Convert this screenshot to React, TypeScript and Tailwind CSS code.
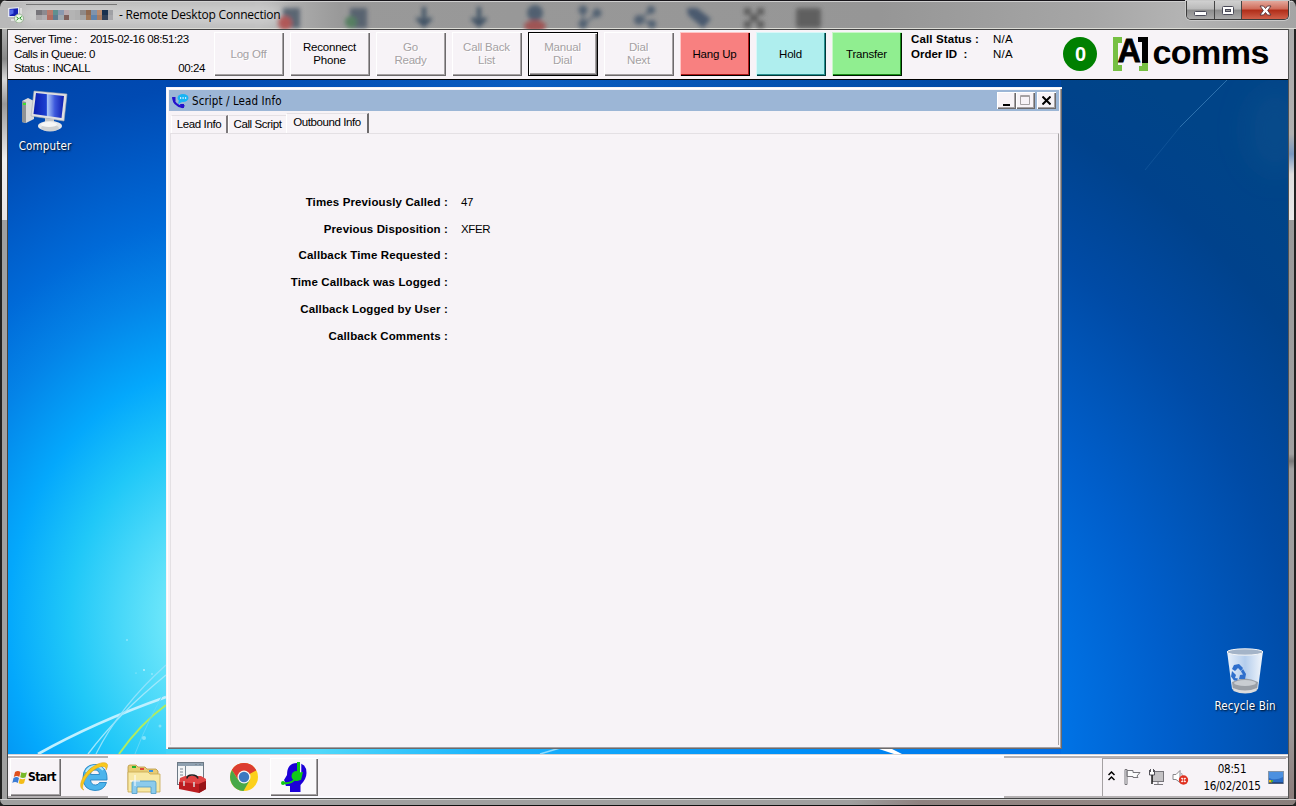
import type { ReactNode } from "react";

const ui = "font-['Liberation_Sans',sans-serif] text-[11.500px]";
const tahoma = "font-['DejaVu_Sans_Condensed','DejaVu_Sans',sans-serif]";

type Tone = "off" | "plain" | "focus" | "red" | "cyan" | "green";

const tones: Record<Tone, string> = {
  off: "text-[#a5a1a3] [text-shadow:1px_1px_#fff] shadow-[inset_1px_1px_#fff,inset_-1px_-1px_#6d6a6c,inset_-2px_-2px_#a5a1a3]",
  plain: "text-black shadow-[inset_1px_1px_#fff,inset_-1px_-1px_#6d6a6c,inset_-2px_-2px_#a5a1a3]",
  focus:
    "text-[#a5a1a3] [text-shadow:1px_1px_#fff] shadow-[inset_0_0_0_1px_#000,inset_2px_2px_#fff,inset_-2px_-2px_#6d6a6c,inset_-3px_-3px_#a5a1a3]",
  red: "bg-[#f88080] text-black shadow-[inset_1px_1px_#ffc6c6,inset_-1px_-1px_#000,inset_-2px_-2px_#b01818]",
  cyan: "bg-[#afeeee] text-black shadow-[inset_1px_1px_#d8f8f8,inset_-1px_-1px_#003838,inset_-2px_-2px_#289090]",
  green: "bg-[#90ee90] text-black shadow-[inset_1px_1px_#c8f8c8,inset_-1px_-1px_#001800,inset_-2px_-2px_#189018]",
};

const buttons: { lines: string[]; tone: Tone; wide?: boolean }[] = [
  { lines: ["Log Off"], tone: "off" },
  { lines: ["Reconnect", "Phone"], tone: "plain", wide: true },
  { lines: ["Go", "Ready"], tone: "off" },
  { lines: ["Call Back", "List"], tone: "off" },
  { lines: ["Manual", "Dial"], tone: "focus" },
  { lines: ["Dial", "Next"], tone: "off" },
  { lines: ["Hang Up"], tone: "red" },
  { lines: ["Hold"], tone: "cyan" },
  { lines: ["Transfer"], tone: "green" },
];

const fields = [
  ["Times Previously Called :", "47"],
  ["Previous Disposition :", "XFER"],
  ["Callback Time Requested :", ""],
  ["Time Callback was Logged :", ""],
  ["Callback Logged by User :", ""],
  ["Callback Comments :", ""],
];

const mosaic = [
  "#77757a", "#8c8a90", "#b87a6c", "#5f9090", "#8a98b0", "#b9a9ae", "#b4b4b4", "#b0b0b0", "#8f8a88", "#8f6a50", "#7f93ad", "#b88c72", "#17304f", "#9fa0a4",
  "#a9a6a8", "#b0aeb2", "#b06c60", "#5f7c90", "#a0a8b0", "#80605c", "#b4b4b4", "#b0b0b0", "#a7a8a8", "#a07858", "#5f83ad", "#a87c62", "#304058", "#a8a8ac",
];

function GlassBlurs() {
  return (
    <svg className="absolute left-0 top-0" width="1296" height="29">
      <defs>
        <filter id="soft" x="-50%" y="-50%" width="200%" height="200%">
          <feGaussianBlur stdDeviation="2.2" />
        </filter>
        <filter id="glow" x="-20%" y="-100%" width="140%" height="300%">
          <feGaussianBlur stdDeviation="7" />
        </filter>
      </defs>
      <rect x="20" y="6" width="262" height="18" rx="9" fill="#d8d8d8" opacity=".75" filter="url(#glow)" />
      <g filter="url(#soft)" opacity=".85">
        <rect x="283" y="8" width="17" height="20" fill="#4d5a69" />
        <circle cx="285" cy="23" r="7" fill="#b04a48" />
        <rect x="350" y="8" width="17" height="20" fill="#4d5a69" />
        <circle cx="351" cy="22" r="6" fill="#4c7a58" />
        <path d="M424 7v17M417 18l7 7 7-7" stroke="#33475c" strokeWidth="4" fill="none" />
        <path d="M479 7v17M472 18l7 7 7-7" stroke="#33475c" strokeWidth="4" fill="none" />
        <circle cx="535" cy="13" r="8" fill="#44566a" />
        <ellipse cx="535" cy="26" rx="11" ry="6" fill="#a04848" />
        <g fill="#46586c" stroke="#46586c" strokeWidth="2">
          <path d="M583 11v13L597 14" fill="none" />
          <circle cx="583" cy="10" r="3.500" />
          <circle cx="583" cy="24" r="3.500" />
          <circle cx="597" cy="13" r="3.500" />
          <path d="M652 10l-12 9 12 5" fill="none" />
          <circle cx="651" cy="10" r="3" />
          <circle cx="639" cy="20" r="4" />
          <circle cx="652" cy="24" r="3" />
        </g>
        <path d="M687 8h10l14 11-8 9-15-13z" fill="#3c5068" />
        <g fill="#555">
          <rect x="744" y="8" width="7" height="7" />
          <rect x="757" y="8" width="7" height="7" />
          <rect x="744" y="21" width="7" height="7" />
          <rect x="757" y="21" width="7" height="7" />
          <rect x="750" y="14" width="8" height="8" />
        </g>
        <rect x="796" y="8" width="25" height="20" rx="3" fill="#565656" />
      </g>
    </svg>
  );
}

function RemoteIcon() {
  return (
    <svg width="16" height="16" viewBox="0 0 16 16">
      <path d="M0 1l11-1v10H0z" fill="#e4e8f0" />
      <path d="M1.500 2l8.500-.8v7.800H1.500z" fill="#1420b4" />
      <path d="M2 2.500h3.500v4L2 8z" fill="#5068e8" />
      <path d="M3 12h5v2H3z" fill="#ddd" />
      <path d="M12 1h2v7h-2z" fill="#ddd" />
      <circle cx="11" cy="11.500" r="4.500" fill="#e9f6e4" stroke="#7e9a78" strokeWidth=".7" />
      <path d="M8.500 10l2 1.500-2 1.700M13.700 9.500l-2 1.700 2 1.500" stroke="#1b9420" strokeWidth="1" fill="none" />
    </svg>
  );
}

function TitleBar() {
  return (
    <header className="relative h-[29px] shrink-0 bg-[linear-gradient(90deg,#b9b9b9_0,#bababa_260px,#999_340px,#969696_880px,#a6a6a6_1090px,#b3b3b3_1180px,#a4a4a4_1296px)] shadow-[inset_0_1px_#17151a,inset_0_2px_#cfcfcf,inset_0_-1px_#dcdcd6]">
      <GlassBlurs />
      <div className="relative flex h-full items-start justify-between">
        <div className="flex h-[29px] items-center pl-2">
          <RemoteIcon />
          <div className="ml-[2px] mt-[1px] flex h-[22px] w-[91px] items-center justify-center border-t border-[#777] pl-[6px]">
            <div className="mb-0.5 grid grid-cols-14 [grid-auto-rows:5px]">
              {mosaic.map((c, i) => (
                <span key={i} className="w-[5.500px]" style={{ background: c }} />
              ))}
            </div>
          </div>
          <span className="ml-0.5 whitespace-nowrap font-['Open_Sans',sans-serif] text-[12px] leading-4 tracking-[-0.200px] text-black">
            - Remote Desktop Connection
          </span>
        </div>
        <div className="mr-[7px] mt-[1px] flex h-[19px] w-[103px] overflow-hidden rounded-b-[5px] border border-t-0 border-[#3a3a3a] shadow-[0_0_0_1px_#c8c8c8]">
          <div className="flex w-[28px] items-center justify-center border-r border-[#444] bg-[linear-gradient(#d0d0d0_0,#b9b9b9_45%,#8c8c8c_50%,#aaa_100%)]">
            <svg width="13" height="5" className="mt-1.5">
              <rect x=".5" y=".5" width="12" height="4" rx="1" fill="#fff" stroke="#4a4a58" />
            </svg>
          </div>
          <div className="flex w-[27px] items-center justify-center border-r border-[#444] bg-[linear-gradient(#d0d0d0_0,#b9b9b9_45%,#8c8c8c_50%,#aaa_100%)]">
            <svg width="12" height="9">
              <rect x=".5" y=".5" width="11" height="8" rx="1" fill="#fff" stroke="#4a4a58" />
              <rect x="3.500" y="3.500" width="5" height="2" fill="#999" stroke="#4a4a58" />
            </svg>
          </div>
          <div className="flex flex-1 items-center justify-center bg-[linear-gradient(#e3a89c_0,#cf6a58_45%,#b02c18_50%,#d0604a_100%)]">
            <svg width="13" height="11" viewBox="0 0 13 11">
              <path d="M1 1h3.500l2 2.500 2-2.500H12L8.700 5.500 12 10H8.500l-2-2.500-2 2.500H1l3.300-4.500z" fill="#fff" stroke="#53333a" strokeWidth=".9" />
            </svg>
          </div>
        </div>
      </div>
    </header>
  );
}

function Logo() {
  return (
    <div className="flex h-[36px] items-start">
      <svg width="36" height="35" viewBox="0 0 36 35" className="shrink-0 overflow-visible">
        <path d="M0 0h9v6H5v22h4v6H0z" fill="#76c043" />
        <path d="M29 26h6v8h-9v-5h3z" fill="#76c043" />
        <path d="M25 0h10v26h-6V5h-4z" fill="#000" />
        <text
          transform="translate(4.500 25.300) scale(.95 1)"
          className="font-['Liberation_Sans',sans-serif] text-[34px] font-bold"
          fill="#000"
          stroke="#000"
          strokeWidth=".8"
        >
          A
        </text>
      </svg>
      <span className="ml-[3px] mt-[-4px] font-['Liberation_Sans',sans-serif] text-[34px] font-bold leading-[38px] tracking-[-0.5px] text-black">
        comms
      </span>
    </div>
  );
}

function Toolbar() {
  return (
    <div className={`flex h-[50px] shrink-0 border-b border-black bg-[#f7f3f7] text-black ${ui}`}>
      <div className="w-[206px] pl-[6px] pt-[2px] leading-[14.500px] tracking-[-0.42px]">
        <p className="flex gap-[13px] whitespace-pre">
          <span>Server Time :</span>
          <span>2015-02-16 08:51:23</span>
        </p>
        <p>Calls in Queue: 0</p>
        <p className="flex justify-between pr-[9px]">
          <span>Status : INCALL</span>
          <span>00:24</span>
        </p>
      </div>
      <div className="flex gap-1.5 pt-[2px]">
        {buttons.map((b) => (
          <button
            key={b.lines[0]}
            className={`flex h-[44px] flex-col items-center justify-center pr-px leading-[13px] tracking-[-0.2px] ${b.wide ? "w-[80px]" : "w-[70px]"} ${tones[b.tone]}`}
          >
            {b.lines.map((l) => (
              <span key={l}>{l}</span>
            ))}
          </button>
        ))}
      </div>
      <dl className="ml-[9px] grid h-[30px] grid-cols-[82px_auto] pt-[2px] leading-[15px]">
        <dt className="font-bold tracking-[0.12px]">Call Status :</dt>
        <dd className="tracking-[0.2px]">N/A</dd>
        <dt className="font-bold">Order ID &nbsp;:</dt>
        <dd className="tracking-[0.2px]">N/A</dd>
      </dl>
      <div className="ml-auto flex pr-[19px] pt-[7px]">
        <span className="mr-4 flex size-[34px] items-center justify-center rounded-full bg-[#008000] pb-px text-[20px] font-bold text-white">
          0
        </span>
        <Logo />
      </div>
    </div>
  );
}

function Wallpaper() {
  return (
    <svg className="absolute left-0 top-0" width="1280" height="674" viewBox="8 80 1280 674">
      <defs>
        <radialGradient id="wl" gradientUnits="userSpaceOnUse" cx="0" cy="0" r="560" gradientTransform="translate(230 620) scale(1 1.15)">
          <stop offset="0" stopColor="#a0f4fc" />
          <stop offset=".114" stopColor="#6ce6fa" />
          <stop offset=".287" stopColor="#20c8f8" />
          <stop offset=".396" stopColor="#04a8fc" />
          <stop offset=".518" stopColor="#0484e8" />
          <stop offset=".625" stopColor="#006ad8" />
          <stop offset=".737" stopColor="#0058c4" />
          <stop offset=".83" stopColor="#004ab2" />
          <stop offset="1" stopColor="#0040a4" />
        </radialGradient>
        <radialGradient id="wr" gradientUnits="userSpaceOnUse" cx="700" cy="750" r="800">
          <stop offset=".4" stopColor="#007cf0" />
          <stop offset=".469" stopColor="#0070e2" />
          <stop offset=".586" stopColor="#005fcc" />
          <stop offset=".675" stopColor="#0055b8" />
          <stop offset=".76" stopColor="#004ba6" />
          <stop offset=".9" stopColor="#00428c" />
          <stop offset="1" stopColor="#004488" />
        </radialGradient>
        <linearGradient id="wt">
          <stop offset="0" stopColor="#0048b0" />
          <stop offset=".4" stopColor="#0a5cc0" />
          <stop offset="1" stopColor="#0046a0" />
        </linearGradient>
        <linearGradient id="wb">
          <stop offset="0" stopColor="#40d4f8" />
          <stop offset=".17" stopColor="#50d8fa" />
          <stop offset=".35" stopColor="#1cb4fc" />
          <stop offset=".7" stopColor="#0090f8" />
          <stop offset="1" stopColor="#006ce4" />
        </linearGradient>
        <filter id="s1">
          <feGaussianBlur stdDeviation=".6" />
        </filter>
        <filter id="s2" x="-100%" y="-100%" width="300%" height="300%">
          <feGaussianBlur stdDeviation="14" />
        </filter>
      </defs>
      <rect x="8" y="80" width="158" height="674" fill="url(#wl)" />
      <rect x="166" y="80" width="896" height="20" fill="url(#wt)" />
      <rect x="166" y="740" width="896" height="14" fill="url(#wb)" />
      <rect x="1061" y="80" width="227" height="674" fill="url(#wr)" />
      <ellipse cx="1275" cy="130" rx="30" ry="45" fill="#14568e" opacity=".35" filter="url(#s2)" />
      <path d="M1227 80L1180 127" stroke="#4c90c8" strokeWidth="1" opacity=".6" />
      <path d="M1180 127L1145 170" stroke="#3c80bc" strokeWidth="1" opacity=".25" />
      <g fill="none" filter="url(#s1)">
        <path d="M38 754Q95 722 166 697" stroke="#bff0ff" strokeWidth="2.600" />
        <path d="M88 754Q118 714 166 675" stroke="#9fe8fc" strokeWidth="1.300" />
        <path d="M96 754Q120 706 166 665" stroke="#8fe2fc" strokeWidth="1.200" />
        <path d="M119 754Q140 724 166 705" stroke="#b0ec60" strokeWidth="2" />
        <path d="M135 754Q150 715 166 690" stroke="#60d8fa" strokeWidth="1" />
      </g>
      <g fill="#b8f0fc">
        <circle cx="144" cy="670" r="1" />
        <circle cx="152" cy="674" r=".8" />
        <circle cx="136" cy="673" r=".6" />
        <circle cx="127" cy="640" r=".8" />
        <circle cx="144" cy="738" r="2" opacity=".6" />
        <circle cx="160" cy="726" r="1.500" opacity=".5" />
      </g>
      <path d="M876 748l18 6h8l-12-6z" fill="#fff" />
      <path d="M540 754l20-6" stroke="#8fdcff" strokeWidth="1.500" />
    </svg>
  );
}

function DesktopIcon({ label, children }: { label: string; children: ReactNode }) {
  return (
    <div className="flex w-[74px] flex-col items-center">
      {children}
      <span className={`mt-1 whitespace-nowrap text-[11.500px] leading-4 tracking-[0.150px] text-white [text-shadow:1px_1px_2px_#000] ${tahoma}`}>
        {label}
      </span>
    </div>
  );
}

function ComputerIcon() {
  return (
    <svg width="48" height="44" viewBox="0 0 48 44">
      <defs>
        <linearGradient id="scr">
          <stop offset="0" stopColor="#0a1eb0" />
          <stop offset=".42" stopColor="#1c40d0" />
          <stop offset=".46" stopColor="#a8c4f8" />
          <stop offset=".7" stopColor="#3c58dc" />
          <stop offset="1" stopColor="#0c1cae" />
        </linearGradient>
      </defs>
      <path d="M1 11l6-3 6 3v18l-8 4-4-1z" fill="#d9dadb" />
      <path d="M1 11l4 1v21l-4-1z" fill="#8f9396" />
      <rect x="2" y="13" width="3" height="2" fill="#3ce030" />
      <path d="M13 1l33 3-3 27-33-5z" fill="#dfe0e2" stroke="#a8abb0" strokeWidth=".6" />
      <path d="M15 3l28 3-2.500 22L12.500 24z" fill="url(#scr)" />
      <path d="M24 28l9 1v5h-9z" fill="#c4c6c8" />
      <ellipse cx="29" cy="36" rx="12" ry="5" fill="#e6e7e8" />
      <ellipse cx="29" cy="38" rx="9" ry="3.500" fill="#cfd1d2" />
      <ellipse cx="28" cy="34.500" rx="8" ry="2.500" fill="#f6f6f6" />
    </svg>
  );
}

function BinIcon() {
  return (
    <svg width="38" height="46" viewBox="0 0 38 46">
      <defs>
        <linearGradient id="bin">
          <stop offset="0" stopColor="#e8f0fa" />
          <stop offset=".5" stopColor="#b4cdec" />
          <stop offset="1" stopColor="#f2f6fb" />
        </linearGradient>
      </defs>
      <path d="M1 3l5 38q13 8 26 0l5-38z" fill="url(#bin)" />
      <path d="M6 34q13-7 26 0l-1 8q-12 6-24 0z" fill="#9a9fa6" />
      <ellipse cx="19" cy="35" rx="11" ry="3" fill="#c9cdd2" />
      <path d="M7 40q12 5 24 0l-.5 3q-11 5-23 0z" fill="#dcdcdc" />
      <ellipse cx="19" cy="4" rx="18" ry="3.200" fill="#a4b4c8" stroke="#f4f6f8" strokeWidth="1" />
      <g fill="#2f6fcc">
        <path d="M8 17l5-1 4 4-2 3-3-3-3 3-3-2z" />
        <path d="M17 21l3 5-1 5h-6l1-4 3-.5-2-3z" />
        <path d="M6 23l4 4-1 3 3 .500-1 2H8l-3-4z" />
      </g>
    </svg>
  );
}

function WinButton({ children }: { children: ReactNode }) {
  return (
    <button className="flex h-[17px] w-[19px] items-center justify-center bg-[#f7f3f7] shadow-[inset_1px_1px_#fff,inset_-1px_-1px_#6d6a6c,inset_-2px_-2px_#a5a1a3]">
      {children}
    </button>
  );
}

function LeadWindow() {
  return (
    <section className="mt-[7px] flex h-[662px] w-[896px] flex-col bg-[#f7f3f7] p-[3px] shadow-[inset_1px_1px_#f7f3f7,inset_2px_2px_#fff,inset_-1px_-1px_#6d6a6c,inset_-2px_-2px_#a5a1a3]">
      <div className="flex h-[21px] shrink-0 items-center bg-[#9cb6d6] pl-[3px] pr-[3px]">
        <svg width="17" height="16" viewBox="0 0 17 16">
          <ellipse cx="11" cy="5" rx="5.500" ry="4" fill="#18b4f4" />
          <path d="M7 7l-1 4 4-2z" fill="#18b4f4" />
          <path d="M8 5h1.200M10.500 5h1.200M13 5h1.200" stroke="#fff" strokeWidth="1.300" />
          <path d="M1.500 5q0 7 9 9l1.500-2" stroke="#2410cc" strokeWidth="2.200" fill="none" />
          <path d="M0 4h3.500v4H1zM8 11h4v4l-3-.5z" fill="#2410cc" />
        </svg>
        <span className={`ml-[3px] flex-1 text-[11.500px] leading-4 tracking-[0.1px] text-black ${tahoma}`}>
          Script / Lead Info
        </span>
        <WinButton>
          <svg width="8" height="10"><path d="M0 8h7v2H0z" fill="#000" /></svg>
        </WinButton>
        <WinButton>
          <svg width="11" height="11">
            <path d="M.5 .5h9v9h-9zM0 1.500h10" fill="none" stroke="#a5a1a3" />
          </svg>
        </WinButton>
        <span className="w-[2px]" />
        <WinButton>
          <svg width="9" height="9"><path d="M.5 .5l8 8M8.500 .5l-8 8" stroke="#000" strokeWidth="2" /></svg>
        </WinButton>
      </div>
      <div className={`ml-[2px] mt-[2px] flex h-[20px] shrink-0 items-end leading-[16px] tracking-[-0.400px] text-black ${ui}`}>
        <div className="flex h-[18px] w-[57px] items-center justify-center whitespace-nowrap border-l border-r-2 border-t border-l-white border-r-[#7d797c] border-t-[#e4e0e4] pb-[2px]">Lead Info</div>
        <div className="flex h-[18px] w-[58px] items-center justify-center whitespace-nowrap border-l border-t border-l-white border-t-[#e4e0e4] pb-[2px]">Call Script</div>
        <div className="flex h-[20px] w-[83px] items-start justify-center whitespace-nowrap border-l border-r-2 border-t border-l-white border-r-[#6d6a6c] border-t-[#e4e0e4]">Outbound Info</div>
      </div>
      <div className="mb-px ml-px flex-1 border-l border-r border-t border-l-[#e4e0e4] border-r-[#a5a1a3] border-t-[#e4e0e4] pt-[55px]">
        {fields.map(([k, v]) => (
          <div key={k} className={`flex h-[26.800px] items-center text-black ${ui}`}>
            <span className="w-[277px] text-right font-bold tracking-[0.130px]">{k}</span>
            <span className="ml-[13px] tracking-[-0.400px]">{v}</span>
          </div>
        ))}
      </div>
    </section>
  );
}

function FlagLogo() {
  return (
    <svg width="16" height="15" viewBox="0 0 16 15" className="shrink-0">
      <path d="M3 2q3-2 5.500 0L7.300 7Q5 5 1.800 7z" fill="#e0501c" />
      <path d="M9.300 2.300q3 1.500 5.700 0l-1.400 5q-2.600 1.300-5.400 0z" fill="#78b828" />
      <path d="M1.500 8q3-2 5.500 0l-1.200 5Q3 11 .3 13z" fill="#3c7cd4" />
      <path d="M7.800 8.500q3 1.500 5.600 0L12 13.300q-2.600 1.500-5.400 0z" fill="#f4bc18" />
    </svg>
  );
}

function IeIcon() {
  return (
    <svg width="30" height="32" viewBox="0 0 30 32">
      <path d="M15.500 3.500C23 3.500 28 9 28 17v2H11.500q.5 5 5 5 3 0 4-2.500h7Q25 29.500 16 29.500 4 29 4 16.500 4.500 4 15.500 3.500zM11.500 13.500h9q-.5-4.500-4.500-4.500t-4.500 4.500z" fill="#4cb4ec" stroke="#2484c4" strokeWidth=".9" />
      <path d="M7 11q3-6 9-6 5 0 8 4" stroke="#b4e8fc" strokeWidth="2" fill="none" />
      <path d="M5 29C-2 27 3 15 11 8S28 0 28.500 4q.3 2-1.500 5 .5-4-4-3.500C17 6 9 13 6 19s-3 9-1 10z" fill="#f8c81c" stroke="#d89c10" strokeWidth=".5" />
    </svg>
  );
}

function FoldersIcon() {
  return (
    <svg width="34" height="32" viewBox="0 0 34 32">
      <path d="M1 4q0-2 2-2h6l2 2h7l2 2h9l2 2v19H1z" fill="#e8cc74" stroke="#b89440" strokeWidth=".8" />
      <rect x="5" y="3" width="4" height="2" fill="#20b030" />
      <rect x="13" y="5" width="4" height="2" fill="#e04838" />
      <rect x="22" y="7" width="4" height="2" fill="#3c90dc" />
      <path d="M1 9h20l2 2h10v18H1z" fill="#f8e8a4" stroke="#c8a850" strokeWidth=".8" />
      <path d="M5 30.500V20q0-2 2-2h20q2 0 2 2v10.500h-5V24H10v6.500z" fill="#8ccbec" stroke="#4c9ac8" strokeWidth=".8" />
      <path d="M8 12v11M3 18h10" stroke="#fff" strokeWidth="1" />
    </svg>
  );
}

function ToolboxIcon() {
  return (
    <svg width="30" height="33" viewBox="0 0 30 33">
      <rect x=".5" y="1.500" width="26" height="22" fill="#f4f5f7" stroke="#6c7884" />
      <rect x="1" y="2" width="25" height="3" fill="#8fa0b0" />
      <path d="M8.500 5v18M3 8h3M3 11h3M3 14h3M18 3.500h2M22 3.500h2" stroke="#7c8894" strokeWidth="1" />
      <path d="M3 17l5-2h16l5 3v6H2z" fill="#e04444" />
      <path d="M2 21l20 2 7-3v8l-7 4-20-4z" fill="#bc1c20" />
      <path d="M22 23v9l7-4v-8z" fill="#981418" />
      <path d="M10 17.500q0-3.500 5-3.500t6 3.500" stroke="#222" strokeWidth="1.600" fill="none" />
      <path d="M7 20v5M17 21v5" stroke="#d8d8d8" strokeWidth="1.500" />
    </svg>
  );
}

function ChromeLogo() {
  return (
    <svg width="28" height="28" viewBox="0 0 28 28">
      <circle cx="14" cy="14" r="14" fill="#fcd01c" />
      <path d="M14 14L1.900 7A14 14 0 0 1 26.100 7.500z" fill="#dc3c30" />
      <path d="M14 7.500h12.300A14 14 0 0 0 1.900 7l6.400 10z" fill="#dc3c30" />
      <path d="M1.900 7A14 14 0 0 0 13.500 28l6.200-10.800L14 14l-5.700 3.200z" fill="#48a848" />
      <circle cx="14" cy="14" r="6.500" fill="#f4f6f4" />
      <circle cx="14" cy="14" r="5.200" fill="#3c78c0" />
    </svg>
  );
}

function AgentIcon() {
  return (
    <svg width="27" height="30" viewBox="0 0 27 30">
      <path d="M9 30v-6H5q-1-1-.5-3L3 18l3-5Q6 1 16 1q9.500 0 9.500 10 0 6-6 12v7z" fill="#1c00d8" />
      <path d="M19.500 1v10" stroke="#f4f3f7" strokeWidth="1.600" />
      <path d="M17.500 0v12" stroke="#10c818" strokeWidth="3" />
      <path d="M15 11l7-1-2 8-6 1z" fill="#10c818" />
      <circle cx="15.500" cy="14" r="5" fill="#10c818" />
      <path d="M14 17q-4 5-11 4" stroke="#10c818" strokeWidth="2" fill="none" />
      <circle cx="2" cy="21" r="2" fill="#10c818" />
    </svg>
  );
}

function Tray() {
  return (
    <div className="ml-auto mr-[2px] flex h-[38px] w-[184px] items-start border-l border-t border-[#a5a1a3]">
      <svg className="ml-[5px] mt-[12px]" width="7" height="10" viewBox="0 0 7 10">
        <path d="M.5 4l3-3 3 3M.5 9l3-3 3 3" fill="none" stroke="#000" strokeWidth="1.500" />
      </svg>
      <svg className="ml-[9px] mt-[9px]" width="17" height="17" viewBox="0 0 17 17">
        <path d="M1 1.500h2v15H1zM3 2.500h6v2h7l-3 3.500 1 1.500H9v-1H3z" fill="#fcfbfc" stroke="#77757a" />
      </svg>
      <svg className="ml-[7px] mt-[10px]" width="17" height="17" viewBox="0 0 17 17">
        <rect x="4.500" y="2.500" width="11" height="10" fill="#c4c2c4" stroke="#77757a" />
        <path d="M6 15.500h9M10 12.500v3" stroke="#77757a" />
        <path d="M1.500 1v5h5V1M2.500 0v3M5.500 0v3" fill="#fff" stroke="#55535a" />
        <path d="M4 6v9" stroke="#222" strokeWidth="1.500" />
      </svg>
      <svg className="ml-[7px] mt-[10px]" width="17" height="17" viewBox="0 0 17 17">
        <path d="M1 5.500h3l4-4v12l-4-3H1z" fill="#fff" stroke="#8a888c" />
        <path d="M9.500 4q2 3 0 6" stroke="#a5a3a8" fill="none" />
        <circle cx="11.500" cy="11" r="4.700" fill="#e03020" />
        <path d="M9.500 9l4 4M13.500 9l-4 4" stroke="#fff" strokeWidth="1.500" />
        <circle cx="11.500" cy="11" r="1" fill="#e03020" />
      </svg>
      <div className={`ml-[8px] mt-[2px] w-[70px] text-center text-[11.500px] leading-[17px] tracking-[-0.250px] text-black ${tahoma}`}>
        <p>08:51</p>
        <p>16/02/2015</p>
      </div>
      <svg className="ml-[1px] mt-[12px]" width="16" height="13" viewBox="0 0 16 13">
        <rect x=".5" y=".5" width="15" height="12" fill="#2c6cc4" stroke="#8494a8" />
        <path d="M1 1h14v5Q8 10 1 7z" fill="#4c90e0" />
        <path d="M1 9h3v3H1z" fill="#e8b820" />
        <path d="M3 9h2v2H3z" fill="#50a838" />
        <path d="M1 12h14" stroke="#14244c" />
      </svg>
    </div>
  );
}

function Taskbar() {
  return (
    <footer className="flex h-[44px] shrink-0 border-t border-[#d8d4d8] bg-[#f7f3f7] bg-[linear-gradient(#fff_0_1px,transparent_1px),linear-gradient(90deg,#b5b1b3_0_100px,#fbfaff_100px_996px,#b5b1b3_996px)] bg-[size:100%_1px,100%_100%] bg-no-repeat">
      <div className="mb-[2px] mt-[3px] flex flex-1 bg-[#f7f3f7]">
        <button className="ml-[2px] h-[38px] w-[51px] bg-[#f7f3f7] pl-[2px] shadow-[inset_1px_1px_#fff,inset_-1px_-1px_#6d6a6c,inset_-2px_-2px_#a5a1a3]">
          <span className={`flex items-center text-[12px] font-bold tracking-[-0.550px] text-black ${tahoma}`}>
            <FlagLogo />
            Start
          </span>
        </button>
        <div className="ml-[18px] flex items-start pt-[3px]">
          <IeIcon />
          <span className="ml-[18px] pt-[2px]"><FoldersIcon /></span>
          <span className="ml-[16px]"><ToolboxIcon /></span>
          <span className="ml-[23px] pt-[2px]"><ChromeLogo /></span>
        </div>
        <button className="ml-[12px] flex h-[38px] w-[48px] items-center justify-center bg-[#faf8fa] shadow-[inset_1px_1px_#fff,inset_-1px_-1px_#6d6a6c,inset_-2px_-2px_#a5a1a3]">
          <AgentIcon />
        </button>
        <Tray />
      </div>
    </footer>
  );
}

export default function App() {
  return (
    <div className="h-[806px] w-[1296px] overflow-hidden bg-[#222]">
      <div className="flex h-full flex-col overflow-hidden rounded-[7px]">
        <TitleBar />
        <div className="flex h-[770px] shrink-0">
          <div className="w-[8px] border-l-2 border-r border-l-[#222] border-r-[#444] bg-[linear-gradient(#b0b0b0_0,#888_30px,#d8d8d8_50px,#999_75px,#eee_130px,#e8e4e4_191px,#a0a0a0_191px)]" />
          <div className="flex w-[1280px] flex-col border-y border-[#444]">
            <Toolbar />
            <main className="relative h-[674px] shrink-0">
              <Wallpaper />
              <div className="relative flex h-full">
                <div className="w-[158px] pt-[10px]">
                  <DesktopIcon label="Computer">
                    <ComputerIcon />
                  </DesktopIcon>
                </div>
                <LeadWindow />
                <div className="flex flex-1 items-end justify-end pb-[40px] pr-[6px]">
                  <DesktopIcon label="Recycle Bin">
                    <BinIcon />
                  </DesktopIcon>
                </div>
              </div>
            </main>
            <Taskbar />
          </div>
          <div className="w-[8px] border-l border-r-2 border-l-[#555] border-r-[#222] bg-[linear-gradient(#aaa_0,#b0b0b0_105px,#7898c0_125px,#ddd_145px,#e8e8e8_191px,#999_191px,#a0a0a0_425px,#777_432px,#a0a0a0_440px,#9c9898_700px,#8a7c7a_770px)]" />
        </div>
        <div className="h-[7px] border-b border-t border-b-[#111] border-t-[#d0d0d0] bg-[linear-gradient(90deg,#a0a0a0_0_850px,#8f8280_920px,#938684_1100px,#8a7e7c_1296px)]" />
      </div>
    </div>
  );
}
